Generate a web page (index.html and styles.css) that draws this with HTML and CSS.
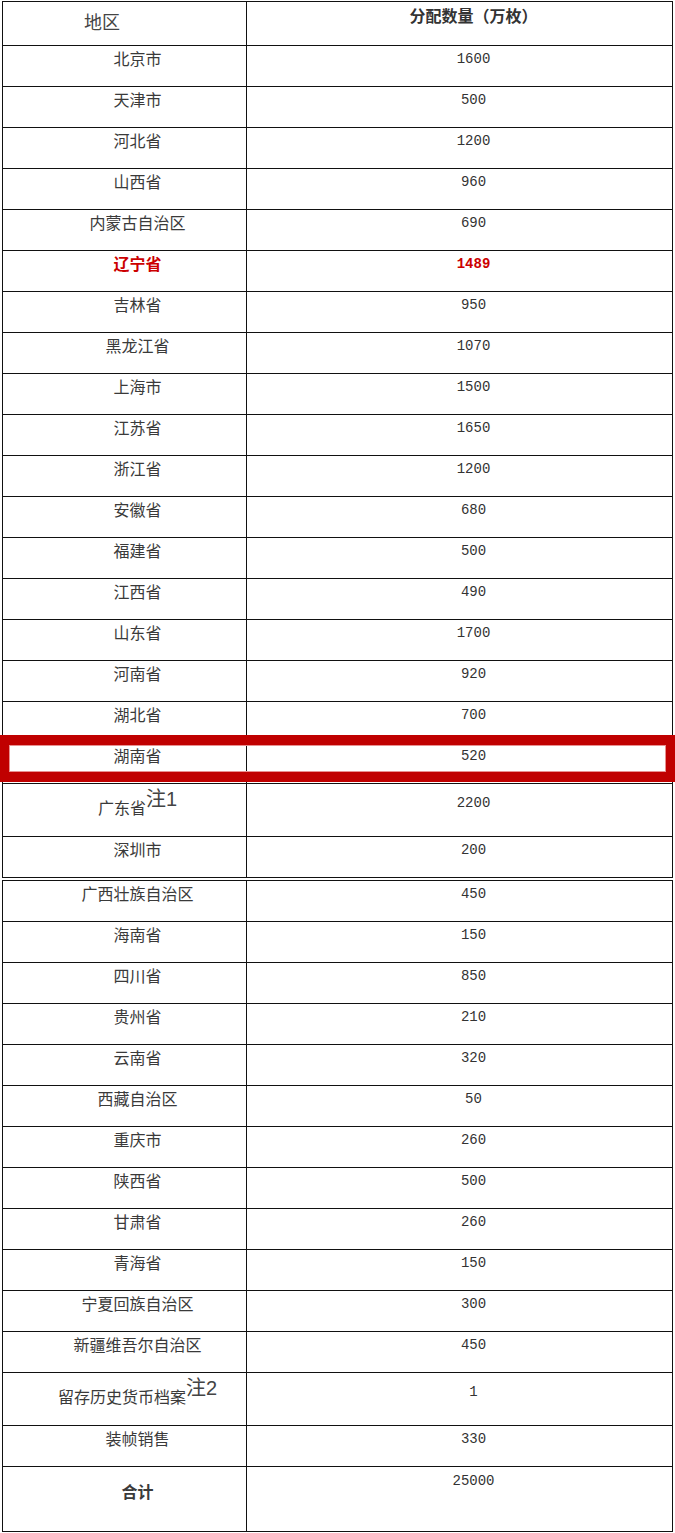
FILE: index.html
```html
<!DOCTYPE html>
<html lang="zh-CN">
<head>
<meta charset="utf-8">
<title>分配数量</title>
<link rel="stylesheet" href="styles.css">
</head>
<body>
<div class="wrap">
<table class="alloc">
<colgroup><col class="c1"><col class="c2"></colgroup>
<tbody>
<tr class="head"><td class="h1">地区</td><td class="h2">分配数量（万枚）</td></tr>
<tr><td class="n">北京市</td><td class="v">1600</td></tr>
<tr><td class="n">天津市</td><td class="v">500</td></tr>
<tr><td class="n">河北省</td><td class="v">1200</td></tr>
<tr><td class="n">山西省</td><td class="v">960</td></tr>
<tr><td class="n">内蒙古自治区</td><td class="v">690</td></tr>
<tr class="hl"><td class="n">辽宁省</td><td class="v">1489</td></tr>
<tr><td class="n">吉林省</td><td class="v">950</td></tr>
<tr><td class="n">黑龙江省</td><td class="v">1070</td></tr>
<tr><td class="n">上海市</td><td class="v">1500</td></tr>
<tr><td class="n">江苏省</td><td class="v">1650</td></tr>
<tr><td class="n">浙江省</td><td class="v">1200</td></tr>
<tr><td class="n">安徽省</td><td class="v">680</td></tr>
<tr><td class="n">福建省</td><td class="v">500</td></tr>
<tr><td class="n">江西省</td><td class="v">490</td></tr>
<tr><td class="n">山东省</td><td class="v">1700</td></tr>
<tr><td class="n">河南省</td><td class="v">920</td></tr>
<tr><td class="n">湖北省</td><td class="v">700</td></tr>
<tr><td class="n">湖南省</td><td class="v">520</td></tr>
<tr class="tall"><td class="n">广东省<span class="sup">注1</span></td><td class="v">2200</td></tr>
<tr class="r42"><td class="n">深圳市</td><td class="v">200</td></tr>
<tr class="dbl"><td class="n">广西壮族自治区</td><td class="v">450</td></tr>
<tr><td class="n">海南省</td><td class="v">150</td></tr>
<tr><td class="n">四川省</td><td class="v">850</td></tr>
<tr><td class="n">贵州省</td><td class="v">210</td></tr>
<tr><td class="n">云南省</td><td class="v">320</td></tr>
<tr><td class="n">西藏自治区</td><td class="v">50</td></tr>
<tr><td class="n">重庆市</td><td class="v">260</td></tr>
<tr><td class="n">陕西省</td><td class="v">500</td></tr>
<tr><td class="n">甘肃省</td><td class="v">260</td></tr>
<tr><td class="n">青海省</td><td class="v">150</td></tr>
<tr><td class="n">宁夏回族自治区</td><td class="v">300</td></tr>
<tr><td class="n">新疆维吾尔自治区</td><td class="v">450</td></tr>
<tr class="tall"><td class="n">留存历史货币档案<span class="sup">注2</span></td><td class="v">1</td></tr>
<tr><td class="n">装帧销售</td><td class="v">330</td></tr>
<tr class="total"><td class="n">合计</td><td class="v">25000</td></tr>
</tbody>
</table>
<div class="mark"></div>
</div>
</body>
</html>
```
FILE: styles.css
```css
html, body {
  margin: 0;
  padding: 0;
  background: #fff;
}
body {
  font-family: "Noto Sans CJK SC", "Liberation Sans", sans-serif;
  color: #333;
}
.wrap {
  position: relative;
  width: 675px;
  height: 1533px;
  overflow: hidden;
}
.alloc {
  margin: 1px 0 0 2px;
  width: 670px;
  border-collapse: collapse;
  table-layout: fixed;
}
.alloc col.c1 { width: 244px; }
.alloc col.c2 { width: 426px; }
.alloc td {
  border: 1px solid #111;
  padding: 0;
  vertical-align: top;
  text-align: center;
  height: 41px;
  box-sizing: border-box;
  line-height: 20px;
}
.alloc td.n {
  padding: 2px 0 0 26px;
  font-size: 16px;
  color: #3a3a3a;
}
.alloc td.v {
  padding: 3px 0 0 28px;
  font-family: "Liberation Mono", "DejaVu Sans Mono", monospace;
  font-size: 14px;
  color: #333;
}
.alloc .head td { height: 44px; }
.alloc td.h1 {
  vertical-align: middle;
  text-align: left;
  padding: 0 0 6px 81px;
  font-size: 18px;
  color: #444;
}
.alloc td.h2 {
  padding: 3px 0 0 28px;
  font-size: 16px;
  font-weight: bold;
  color: #333;
}
.alloc .hl td {
  color: #cc0000;
  font-weight: bold;
}
.alloc .tall td { height: 53px; }
.alloc .tall td.n { padding-top: 5px; }
.alloc .tall td.v { padding-top: 9px; }
.sup {
  font-family: "Liberation Sans", "Noto Sans CJK SC", sans-serif;
  font-size: 20px;
  vertical-align: 8px;
  line-height: 1;
  color: #444;
}
.alloc .r42 td { height: 42px; }
.alloc .dbl td { border-top: 4px double #111; height: 43px; }
.alloc .total td { height: 65px; }
.alloc .total td.n {
  font-weight: bold;
  padding-top: 14px;
}
.alloc .total td.v { padding-top: 4px; }
.mark {
  position: absolute;
  left: 0;
  top: 735px;
  width: 675px;
  height: 47px;
  box-sizing: border-box;
  border-style: solid;
  border-color: #c00000;
  border-width: 10px 9px;
  box-shadow: inset 0 0 0 1px #e89090;
}
```
